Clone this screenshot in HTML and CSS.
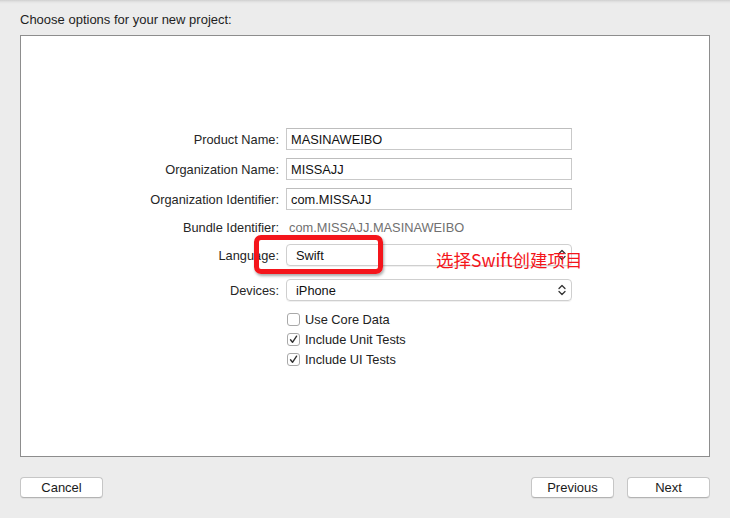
FILE: index.html
```html
<!DOCTYPE html>
<html>
<head>
<meta charset="utf-8">
<link rel="stylesheet" href="styles.css">
</head>
<body>
<div class="window">
  <div class="title">Choose options for your new project:</div>
  <div class="panel">
    <div class="form">
      <div class="row"><label class="lbl">Product Name:</label><div class="field">MASINAWEIBO</div></div>
      <div class="row"><label class="lbl">Organization Name:</label><div class="field">MISSAJJ</div></div>
      <div class="row"><label class="lbl">Organization Identifier:</label><div class="field">com.MISSAJJ</div></div>
      <div class="row row-bundle"><label class="lbl">Bundle Identifier:</label><div class="static">com.MISSAJJ.MASINAWEIBO</div></div>
      <div class="row row-lang"><label class="lbl">Language:</label>
        <div class="popup"><span>Swift</span>
          <svg class="chev" width="8" height="12" viewBox="0 0 8 12"><path d="M1 4.5 L4 1.5 L7 4.5 M1 7.5 L4 10.5 L7 7.5" fill="none" stroke="#333" stroke-width="1.3" stroke-linecap="round" stroke-linejoin="round"/></svg>
        </div>
      </div>
      <div class="row row-dev"><label class="lbl">Devices:</label>
        <div class="popup"><span>iPhone</span>
          <svg class="chev" width="8" height="12" viewBox="0 0 8 12"><path d="M1 4.5 L4 1.5 L7 4.5 M1 7.5 L4 10.5 L7 7.5" fill="none" stroke="#333" stroke-width="1.3" stroke-linecap="round" stroke-linejoin="round"/></svg>
        </div>
      </div>
      <div class="checks">
        <div class="check"><span class="box"></span>Use Core Data</div>
        <div class="check"><span class="box"><svg width="11" height="11" viewBox="0 0 11 11"><path d="M2.5 5.8 L4.5 8.3 L8.6 2.2" fill="none" stroke="#333" stroke-width="1.4" stroke-linecap="round" stroke-linejoin="round"/></svg></span>Include Unit Tests</div>
        <div class="check"><span class="box"><svg width="11" height="11" viewBox="0 0 11 11"><path d="M2.5 5.8 L4.5 8.3 L8.6 2.2" fill="none" stroke="#333" stroke-width="1.4" stroke-linecap="round" stroke-linejoin="round"/></svg></span>Include UI Tests</div>
      </div>
    </div>
    <div class="highlight"></div>
    <div class="note">选择Swift创建项目</div>
  </div>
  <div class="buttons">
    <button class="btn">Cancel</button>
    <div class="right">
      <button class="btn">Previous</button>
      <button class="btn">Next</button>
    </div>
  </div>
</div>
</body>
</html>
```

FILE: styles.css
```css
* { box-sizing: border-box; }
html, body { margin: 0; padding: 0; }
body {
  width: 730px;
  height: 518px;
  background: #ececec;
  font-family: "Liberation Sans", Arial, sans-serif;
  font-size: 12.8px;
  color: #222;
  overflow: hidden;
}
.window {
  height: 518px;
  background: linear-gradient(#cfcfcf 0px, #e4e4e4 2px, #ececec 4px);
  padding: 12px 20px 0 20px;
}
.title {
  height: 23px;
  line-height: 16px;
  font-size: 13px;
  color: #1e1e1e;
}
.panel {
  position: relative;
  height: 422px;
  background: #fff;
  border: 1px solid #8d8d8d;
  padding-top: 92px;
}
.form {
  display: flex;
  flex-direction: column;
}
.row {
  display: grid;
  grid-template-columns: 258px 286px;
  column-gap: 7px;
  align-items: center;
  height: 22px;
  margin-bottom: 8px;
}
.row-bundle { height: 18px; margin-bottom: 8px; }
.row-lang { margin-bottom: 13px; }
.row-dev { margin-bottom: 8px; }
.lbl {
  text-align: right;
  color: #262626;
  white-space: nowrap;
}
.field {
  height: 22px;
  border: 1px solid #c9c9c9;
  border-top-color: #bdbdbd;
  padding-left: 4px;
  line-height: 21px;
  color: #111;
  background: #fff;
}
.static {
  color: #707070;
  padding-left: 3px;
}
.popup {
  height: 22px;
  border: 1px solid #cfcfcf;
  border-radius: 4px;
  box-shadow: 0 1px 0 rgba(0,0,0,0.06);
  display: flex;
  align-items: center;
  justify-content: space-between;
  padding: 0 5px 0 9px;
  color: #111;
}
.chev { display: block; }
.checks {
  display: flex;
  flex-direction: column;
  padding-left: 266px;
}
.check {
  height: 20px;
  display: flex;
  align-items: center;
  gap: 5px;
  color: #222;
}
.box {
  width: 13px;
  height: 13px;
  border: 1px solid #a9a9a9;
  border-radius: 3px;
  background: #fff;
  display: flex;
  align-items: center;
  justify-content: center;
}
.box svg { display: block; }
.highlight {
  position: absolute;
  left: 233px;
  top: 199px;
  width: 129px;
  height: 39px;
  border: 5px solid #f4151b;
  border-radius: 7px;
  box-shadow: 1px 2px 3px rgba(0,0,0,0.35);
}
.note {
  position: absolute;
  left: 415px;
  top: 212px;
  font-family: "Noto Sans CJK SC", "Noto Sans", sans-serif;
  font-size: 17.5px;
  line-height: 24px;
  color: #f4151b;
  white-space: nowrap;
}
.buttons {
  display: flex;
  justify-content: space-between;
  padding-top: 20px;
}
.right { display: flex; gap: 13px; }
.btn {
  width: 83px;
  height: 21px;
  background: #fff;
  border: 1px solid #c6c6c6;
  border-bottom-color: #b3b3b3;
  border-radius: 4px;
  font-family: "Liberation Sans", Arial, sans-serif;
  font-size: 13px;
  color: #1a1a1a;
  padding: 0;
  box-shadow: 0 1px 0 rgba(0,0,0,0.05);
}
```
